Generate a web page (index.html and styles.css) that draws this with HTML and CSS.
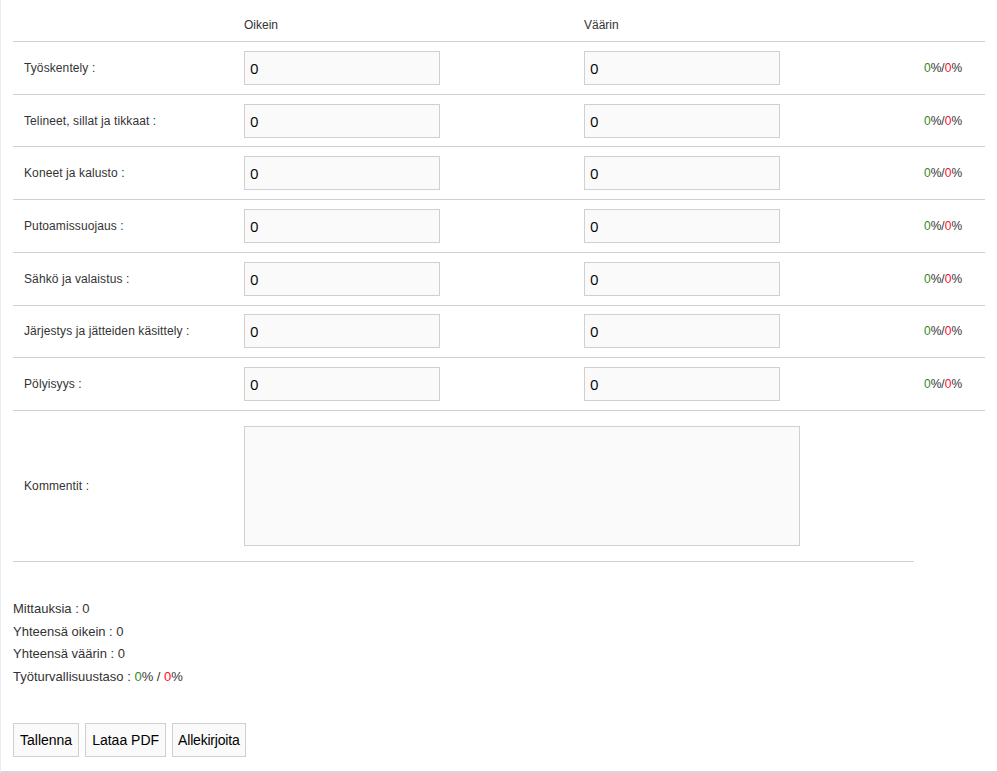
FILE: index.html
```html
<!DOCTYPE html>
<html>
<head>
<meta charset="utf-8">
<link rel="stylesheet" href="styles.css">
</head>
<body>
<div class="page">
  <div class="grid">
    <div class="row head">
      <div class="cell"></div>
      <div class="cell">Oikein</div>
      <div class="cell">Väärin</div>
      <div class="cell"></div>
    </div>
    <div class="row">
      <div class="cell label">Työskentely :</div>
      <div class="cell"><input class="num" value="0"></div>
      <div class="cell"><input class="num" value="0"></div>
      <div class="cell pct"><span class="g">0</span>%/<span class="r">0</span>%</div>
    </div>
    <div class="row">
      <div class="cell label">Telineet, sillat ja tikkaat :</div>
      <div class="cell"><input class="num" value="0"></div>
      <div class="cell"><input class="num" value="0"></div>
      <div class="cell pct"><span class="g">0</span>%/<span class="r">0</span>%</div>
    </div>
    <div class="row">
      <div class="cell label">Koneet ja kalusto :</div>
      <div class="cell"><input class="num" value="0"></div>
      <div class="cell"><input class="num" value="0"></div>
      <div class="cell pct"><span class="g">0</span>%/<span class="r">0</span>%</div>
    </div>
    <div class="row">
      <div class="cell label">Putoamissuojaus :</div>
      <div class="cell"><input class="num" value="0"></div>
      <div class="cell"><input class="num" value="0"></div>
      <div class="cell pct"><span class="g">0</span>%/<span class="r">0</span>%</div>
    </div>
    <div class="row">
      <div class="cell label">Sähkö ja valaistus :</div>
      <div class="cell"><input class="num" value="0"></div>
      <div class="cell"><input class="num" value="0"></div>
      <div class="cell pct"><span class="g">0</span>%/<span class="r">0</span>%</div>
    </div>
    <div class="row">
      <div class="cell label">Järjestys ja jätteiden käsittely :</div>
      <div class="cell"><input class="num" value="0"></div>
      <div class="cell"><input class="num" value="0"></div>
      <div class="cell pct"><span class="g">0</span>%/<span class="r">0</span>%</div>
    </div>
    <div class="row">
      <div class="cell label">Pölyisyys :</div>
      <div class="cell"><input class="num" value="0"></div>
      <div class="cell"><input class="num" value="0"></div>
      <div class="cell pct"><span class="g">0</span>%/<span class="r">0</span>%</div>
    </div>
  </div>
  <div class="comments">
    <div class="cell label">Kommentit :</div>
    <div class="cell"><textarea class="ta"></textarea></div>
  </div>
  <div class="stats">
    <div>Mittauksia : 0</div>
    <div>Yhteensä oikein : 0</div>
    <div>Yhteensä väärin : 0</div>
    <div>Työturvallisuustaso : <span class="g">0</span>% / <span class="r">0</span>%</div>
  </div>
  <div class="buttons">
    <button class="btn">Tallenna</button>
    <button class="btn">Lataa PDF</button>
    <button class="btn alle">Allekirjoita</button>
  </div>
</div>
</body>
</html>
```

FILE: styles.css
```css
html, body {
  margin: 0;
  padding: 0;
  background: #fff;
}
body {
  font-family: "Liberation Sans", Arial, sans-serif;
  font-size: 12px;
  color: #333;
}
.page {
  box-sizing: border-box;
  height: 773px;
  border-left: 1px solid #ececec;
  border-bottom: 2px solid #d6d6d6;
  padding: 0 12px;
}
.grid {
  width: 972px;
}
.row {
  display: grid;
  grid-template-columns: 219px 340px 340px 73px;
  border-bottom: 1px solid #cdd2d6;
  height: 52.71px;
  box-sizing: border-box;
  align-items: center;
}
.row.head {
  height: 42px;
  padding-top: 8px;
}
.cell {
  padding-left: 12px;
}
.label {
  padding-left: 11px;
  letter-spacing: 0.1px;
}
.num {
  box-sizing: border-box;
  width: 196px;
  height: 34px;
  border: 1px solid #d0d0d0;
  background: #fafafa;
  padding: 0 5px;
  font-family: "Open Sans", "DejaVu Sans", sans-serif;
  font-size: 15px;
  color: #000;
  margin: 0;
  display: block;
  outline: none;
}
.pct {
  font-size: 12px;
  color: #333;
}
.g { color: #2f8a1c; }
.r { color: #ff0a2a; }
.comments {
  display: grid;
  grid-template-columns: 219px 682px;
  width: 901px;
  align-items: center;
  border-bottom: 1px solid #cdd2d6;
  padding: 15px 0;
}
.ta {
  box-sizing: border-box;
  width: 556px;
  height: 120px;
  display: block;
  border: 1px solid #d0d0d0;
  background: #fafafa;
  resize: none;
  margin: 0;
  outline: none;
}
.stats {
  margin-top: 36px;
  font-size: 13px;
  line-height: 22.6px;
  color: #333;
}
.buttons {
  margin-top: 35px;
  display: flex;
  gap: 6px;
}
.btn {
  box-sizing: border-box;
  height: 34px;
  padding: 0 6px;
  border: 1px solid #d0d0d0;
  background: #fafafa;
  font-family: "Liberation Sans", Arial, sans-serif;
  font-size: 14px;
  color: #000;
  margin: 0;
}
.alle {
  padding: 0 5px;
  letter-spacing: -0.2px;
}
```
